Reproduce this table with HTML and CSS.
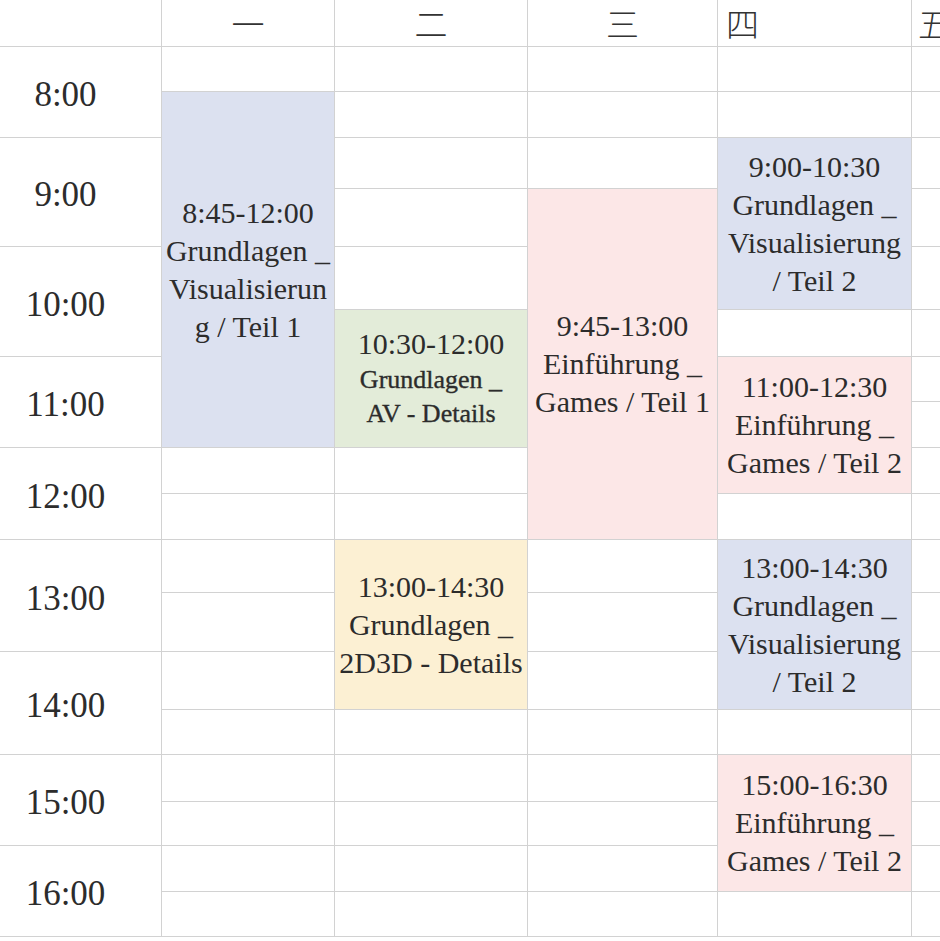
FILE: index.html
```html
<!DOCTYPE html>
<html lang="de">
<head>
<meta charset="utf-8">
<title>Stundenplan</title>
<link rel="stylesheet" href="styles.css">
</head>
<body>
<div class="sheet">
  <div class="hd"></div>
  <div class="hd">一</div>
  <div class="hd">二</div>
  <div class="hd">三</div>
  <div class="hd left">四</div>
  <div class="hd left edge">五</div>

  <div class="t">8:00</div>
  <div class="t">9:00</div>
  <div class="t">10:00</div>
  <div class="t">11:00</div>
  <div class="t">12:00</div>
  <div class="t">13:00</div>
  <div class="t">14:00</div>
  <div class="t">15:00</div>
  <div class="t">16:00</div>

  <div class="blk blue b-mon"><p>8:45-12:00<br>Grundlagen _<br>Visualisierun<br>g / Teil 1</p></div>
  <div class="blk green b-tue1"><p class="sm"><span class="tm">10:30-12:00</span><br>Grundlagen _<br>AV - Details</p></div>
  <div class="blk yellow b-tue2"><p>13:00-14:30<br>Grundlagen _<br>2D3D - Details</p></div>
  <div class="blk pink b-wed"><p>9:45-13:00<br>Einführung _<br>Games / Teil 1</p></div>
  <div class="blk blue b-thu1"><p>9:00-10:30<br>Grundlagen _<br>Visualisierung<br>/ Teil 2</p></div>
  <div class="blk pink b-thu2"><p>11:00-12:30<br>Einführung _<br>Games / Teil 2</p></div>
  <div class="blk blue b-thu3"><p>13:00-14:30<br>Grundlagen _<br>Visualisierung<br>/ Teil 2</p></div>
  <div class="blk pink b-thu4"><p>15:00-16:30<br>Einführung _<br>Games / Teil 2</p></div>

  <div class="e"></div><div class="e"></div><div class="e"></div><div class="e"></div><div class="e"></div>
  <div class="e"></div><div class="e"></div><div class="e"></div><div class="e"></div><div class="e"></div>
  <div class="e"></div><div class="e"></div><div class="e"></div><div class="e"></div><div class="e"></div>
  <div class="e"></div><div class="e"></div><div class="e"></div><div class="e"></div><div class="e"></div>
  <div class="e"></div><div class="e"></div><div class="e"></div><div class="e"></div><div class="e"></div>
  <div class="e"></div><div class="e"></div><div class="e"></div><div class="e"></div><div class="e"></div>
  <div class="e"></div><div class="e"></div><div class="e"></div><div class="e"></div><div class="e"></div>
  <div class="e"></div><div class="e"></div><div class="e"></div><div class="e"></div><div class="e"></div>
  <div class="e"></div><div class="e"></div><div class="e"></div><div class="e"></div><div class="e"></div>
  <div class="e"></div><div class="e"></div><div class="e"></div><div class="e"></div><div class="e"></div>
  <div class="e"></div><div class="e"></div><div class="e"></div><div class="e"></div><div class="e"></div>
  <div class="e"></div><div class="e"></div><div class="e"></div>
</div>
</body>
</html>
```
FILE: styles.css
```css
html, body {
  margin: 0;
  padding: 0;
  background: #ffffff;
  overflow: hidden;
}

.sheet {
  display: grid;
  grid-template-columns: 161px 172px 192px 189px 193px 28px;
  grid-template-rows: 46px 44px 45px 50px 57px 62px 46px 44px 45px 45px 45px 52px 58px 57px 44px 46px 43px 45px 44px;
  grid-auto-flow: dense;
  gap: 1px;
  padding-bottom: 1px;
  background: #d2d2d2;
  width: 940px;
  font-family: "Liberation Serif", "Times New Roman", serif;
  color: #2c2c2c;
}

.hd {
  grid-row: 1;
  background: #fff;
  display: flex;
  align-items: center;
  justify-content: center;
  font-family: "Noto Sans CJK TC", "Noto Sans CJK SC", sans-serif;
  font-weight: 300;
  font-size: 33px;
  line-height: 1;
  color: #333;
  white-space: nowrap;
}

.hd.left {
  justify-content: flex-start;
  padding-left: 8px;
}

.hd.edge {
  overflow: hidden;
  padding-left: 6px;
}

.t {
  grid-column: 1;
  grid-row: span 2;
  background: #fff;
  display: flex;
  align-items: center;
  justify-content: center;
  padding-right: 30px;
  padding-top: 6px;
  font-size: 35px;
}

.e {
  background: #fff;
}

.blk {
  display: flex;
  align-items: center;
  justify-content: center;
}

.blk p {
  margin: 0;
  text-align: center;
  white-space: nowrap;
  font-size: 30px;
  line-height: 38px;
}

.blk p.sm {
  font-size: 26px;
  line-height: 34px;
  -webkit-text-stroke: 0.35px #2c2c2c;
}

.blk p.sm .tm {
  font-size: 30px;
  -webkit-text-stroke: 0;
}

.blue { background: #dce1f0; }
.green { background: #e3ecd9; }
.pink { background: #fce7e7; }
.yellow { background: #fcf0d3; }

.b-mon  { grid-column: 2; grid-row: 3 / 10; }
.b-tue1 { grid-column: 3; grid-row: 7 / 10; }
.b-tue2 { grid-column: 3; grid-row: 12 / 15; }
.b-wed  { grid-column: 4; grid-row: 5 / 12; }
.b-thu1 { grid-column: 5; grid-row: 4 / 7; }
.b-thu2 { grid-column: 5; grid-row: 8 / 11; }
.b-thu3 { grid-column: 5; grid-row: 12 / 15; }
.b-thu4 { grid-column: 5; grid-row: 16 / 19; }
```
